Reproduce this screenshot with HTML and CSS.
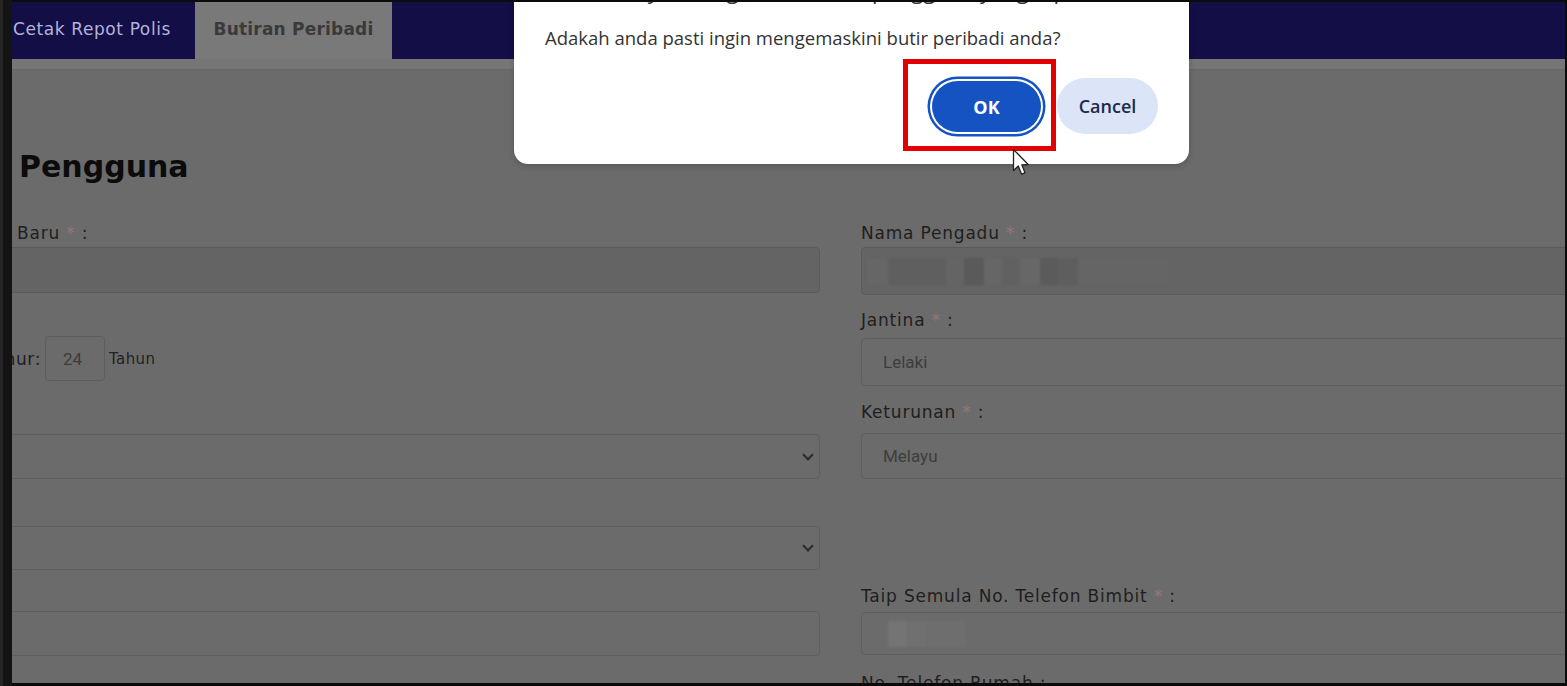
FILE: index.html
```html
<!DOCTYPE html>
<html lang="ms">
<head>
<meta charset="utf-8">
<title>Butiran Peribadi</title>
<link rel="stylesheet" href="styles.css">
</head>
<body>
<div class="frame">
  <div class="page">
    <nav class="nav">
      <div class="tab tab-plain">Cetak Repot Polis</div>
      <div class="tab tab-active">Butiran Peribadi</div>
    </nav>
    <div class="subbar"></div>

    <h1 class="heading">Pengguna</h1>

    <div class="form">
      <div class="col col-left">
        <div class="label label-left">Baru <span class="req">*</span> :</div>
        <div class="field field-disabled f-input1"></div>
        <div class="age-row">
          <div class="age-label"><span>Umur:</span></div>
          <div class="age-box">24</div>
          <div class="age-unit">Tahun</div>
        </div>
        <div class="field select f-select1"><span class="chev"></span></div>
        <div class="field select f-select2"><span class="chev"></span></div>
        <div class="field f-input3"></div>
      </div>

      <div class="col col-right">
        <div class="label">Nama Pengadu <span class="req">*</span> :</div>
        <div class="field field-disabled f-nama">
          <div class="blur">
            <span class="b b1"></span><span class="b b2"></span><span class="b b3"></span><span class="b b4"></span><span class="b b5"></span><span class="b b6"></span><span class="b b7"></span><span class="b b8"></span><span class="b b9"></span><span class="b b10"></span>
          </div>
        </div>
        <div class="label l-jantina">Jantina <span class="req">*</span> :</div>
        <div class="field f-jantina"><span class="val">Lelaki</span></div>
        <div class="label l-keturunan">Keturunan <span class="req">*</span> :</div>
        <div class="field f-keturunan"><span class="val">Melayu</span></div>
        <div class="label l-taip">Taip Semula No. Telefon Bimbit <span class="req">*</span> :</div>
        <div class="field f-taip">
          <div class="blur blur-small"><span class="b c1"></span><span class="b c2"></span><span class="b c3"></span></div>
        </div>
        <div class="label l-rumah">No. Telefon Rumah :</div>
      </div>
    </div>

    <div class="dialog">
      <h2 class="dialog-title">Anda yakin ingin kemaskini pengguna yang dipilih?</h2>
      <p class="dialog-msg">Adakah anda pasti ingin mengemaskini butir peribadi anda?</p>
      <div class="dialog-actions">
        <button class="btn btn-ok">OK</button>
        <button class="btn btn-cancel">Cancel</button>
      </div>
      <div class="highlight"></div>
    </div>

    <svg class="cursor" width="20" height="30" viewBox="0 0 20 30" aria-hidden="true">
      <path d="M1.5 1.5 L1.5 22.5 L6.3 18 L9.6 26.2 L13 24.8 L9.8 16.8 L16.2 16.5 Z" fill="#fff" stroke="#222" stroke-width="1.3" stroke-linejoin="round"/>
    </svg>
  </div>
</div>
</body>
</html>
```

FILE: styles.css
```css
* { box-sizing: border-box; }

html, body {
  margin: 0;
  padding: 0;
  background: #0b0b0b;
}

.frame {
  width: 1567px;
  height: 686px;
  display: flex;
  padding: 2px 2px 3px 12px;
  background: linear-gradient(to right, #262626 0, #262626 3px, #141414 3px, #141414 12px, #0b0b0b 12px);
}

.page {
  flex: 1;
  position: relative;
  overflow: hidden;
  background: #6b6b6b;
  font-family: "DejaVu Sans", "Inter", sans-serif;
  color: #1c1c1c;
}

/* nav */
.nav {
  height: 57px;
  display: flex;
  background: #130e46;
}

.tab {
  display: flex;
  align-items: center;
  font-size: 17px;
  padding-bottom: 3px;
}

.tab-plain {
  width: 183px;
  padding-left: 1px;
  color: #b3b3d9;
  letter-spacing: 0.6px;
}

.tab-active {
  width: 197px;
  justify-content: center;
  background: #797979;
  color: #3a3a3a;
  font-weight: 700;
  letter-spacing: 0.2px;
}

.subbar {
  height: 11px;
  background: #767676;
  border-bottom: 1px solid #686868;
}

.heading {
  margin: 79px 0 0 7px;
  font-size: 30px;
  line-height: 36px;
  font-weight: 700;
  color: #0b0b0b;
}

/* form */
.form {
  margin-top: 37px;
  margin-left: -20px;
  display: grid;
  grid-template-columns: 828px 780px;
  column-gap: 41px;
}

.col {
  display: flex;
  flex-direction: column;
}

.label {
  height: 22px;
  line-height: 22px;
  font-size: 17px;
  color: #1e1e1e;
  white-space: nowrap;
  letter-spacing: 0.8px;
}

.label-left { padding-left: 25px; }

.req { color: #927878; }

.field {
  position: relative;
  border: 1px solid #5f5f5f;
  border-radius: 4px;
  background: #6b6b6b;
  display: flex;
  align-items: center;
}

.field-disabled {
  background: #646464;
  border-color: #5a5a5a;
}

.val {
  padding-left: 21px;
  font-family: "Roboto", "Liberation Sans", sans-serif;
  font-size: 17px;
  color: #3d3d3d;
}

.f-input1 { margin-top: 3px; height: 46px; }

.age-row {
  margin-top: 43px;
  height: 45px;
  display: flex;
  align-items: center;
}

.age-label {
  width: 49px;
  overflow: hidden;
  display: flex;
  justify-content: flex-end;
  font-size: 17px;
  white-space: nowrap;
  color: #1e1e1e;
  letter-spacing: 0.6px;
}

.age-label span { flex: none; }

.age-box {
  margin-left: 4px;
  width: 60px;
  height: 45px;
  padding-right: 5px;
  border: 1px solid #5e5e5e;
  border-radius: 4px;
  display: flex;
  align-items: center;
  justify-content: center;
  font-family: "Roboto", "Liberation Sans", sans-serif;
  font-size: 17px;
  color: #3b3b3b;
}

.age-unit {
  margin-left: 4px;
  font-size: 15px;
  letter-spacing: 0.4px;
  color: #222;
}

.f-select1 { margin-top: 53px; height: 45px; }
.f-select2 { margin-top: 47px; height: 44px; }
.f-input3 { margin-top: 41px; height: 45px; }

.select .chev {
  position: absolute;
  right: 7px;
  top: 50%;
  width: 8px;
  height: 8px;
  margin-top: -6px;
  border-right: 2px solid #2c2c2c;
  border-bottom: 2px solid #2c2c2c;
  transform: rotate(45deg);
}

.f-nama { margin-top: 3px; height: 48px; }
.l-jantina { margin-top: 14px; }
.f-jantina { margin-top: 7px; height: 48px; }
.l-keturunan { margin-top: 15px; }
.f-keturunan { margin-top: 10px; height: 46px; }
.l-taip { margin-top: 106px; }
.f-taip { margin-top: 5px; height: 43px; }
.l-rumah { margin-top: 17px; }

/* blurred placeholder data */
.blur {
  display: flex;
  margin-left: 4px;
  height: 27px;
  filter: blur(1px);
}

.b { display: block; height: 100%; }
.b1 { width: 22px; background: #666666; }
.b2 { width: 58px; background: #5f5f5f; }
.b3 { width: 18px; background: #646464; }
.b4 { width: 20px; background: #5a5a5a; }
.b5 { width: 18px; background: #666666; }
.b6 { width: 18px; background: #616161; }
.b7 { width: 20px; background: #676767; }
.b8 { width: 18px; background: #5b5b5b; }
.b9 { width: 20px; background: #5e5e5e; }
.b10 { width: 90px; background: #656565; }

.blur-small { margin-left: 26px; height: 26px; }
.c1 { width: 18px; background: #747474; }
.c2 { width: 20px; background: #707070; }
.c3 { width: 40px; background: #6e6e6e; }

/* dialog */
.dialog {
  position: absolute;
  left: 502px;
  top: -24px;
  width: 675px;
  padding: 0 31px 30px;
  background: #ffffff;
  border-radius: 0 0 14px 14px;
  box-shadow: 0 2px 6px rgba(0, 0, 0, 0.2);
  font-family: "Open Sans", "Noto Sans", sans-serif;
}

.dialog-title {
  margin: -3px 0 0;
  height: 30px;
  line-height: 30px;
  font-size: 22px;
  font-weight: 400;
  color: #333;
  white-space: nowrap;
  overflow: hidden;
  padding-left: 44px;
}

.dialog-msg {
  margin: 21px 0 0;
  line-height: 24px;
  font-size: 18.5px;
  color: #333;
  white-space: nowrap;
}

.dialog-actions {
  margin-top: 28px;
  height: 56px;
  display: flex;
  justify-content: flex-end;
  align-items: center;
  gap: 16px;
}

.btn {
  border: 0;
  border-radius: 28px;
  font-family: "Open Sans", "Noto Sans", sans-serif;
  font-size: 18px;
  font-weight: 600;
  cursor: pointer;
}

.btn-ok {
  width: 109px;
  height: 51px;
  background: #1553c2;
  color: #fff;
  font-weight: 700;
  box-shadow: 0 0 0 2px #fff, 0 0 0 4.5px #1553c2;
  margin-top: 1px;
}

.btn-cancel {
  width: 101px;
  height: 56px;
  background: #dbe5f7;
  color: #1d2a4d;
}

.highlight {
  position: absolute;
  left: 389px;
  top: 81px;
  width: 153px;
  height: 92px;
  border: 5px solid #e30000;
}

.cursor {
  position: absolute;
  left: 1000px;
  top: 146px;
}
```
